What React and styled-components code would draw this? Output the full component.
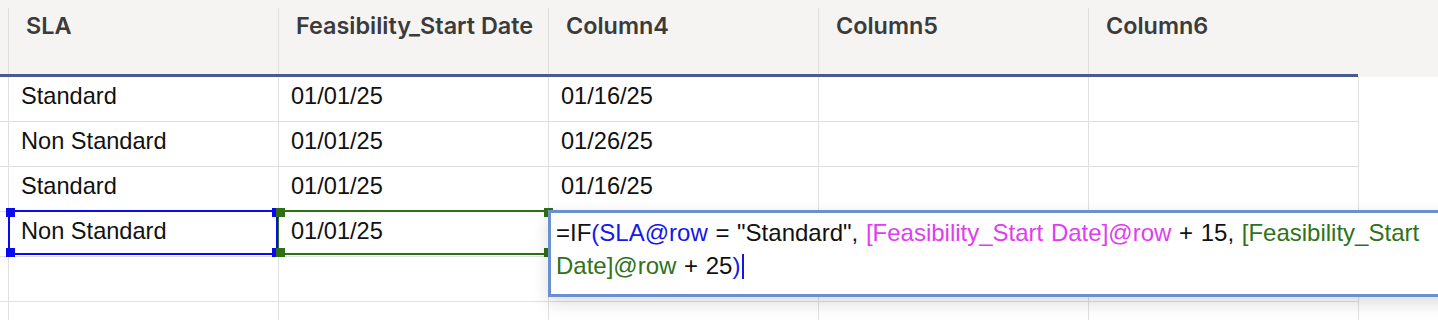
import React from 'react';
import styled, { createGlobalStyle } from 'styled-components';

const GlobalStyle = createGlobalStyle`
  html, body {
    margin: 0;
    padding: 0;
    background: #fff;
    overflow: hidden;
  }
`;

const Sheet = styled.div`
  display: grid;
  grid-template-columns: 8px repeat(5, 270px) 1fr;
  align-content: start;
  width: 100%;
  height: 100vh;
  overflow: hidden;
  font-family: "Liberation Sans", Arial, sans-serif;
`;

const HeadCell = styled.div`
  height: 77px;
  box-sizing: border-box;
  background: #f5f4f2;
  padding-top: 8px;
  border-bottom: ${p => (p.$filler ? 'none' : '3px solid #4b5a8e')};
`;

const HeadLabel = styled.div`
  height: 100%;
  box-sizing: border-box;
  border-left: ${p => (p.$gutter ? 'none' : '1px solid #e2e0dc')};
  padding: 6px 0 0 17px;
  font-family: Inter, "Liberation Sans", sans-serif;
  font-weight: 600;
  font-size: 23.4px;
  line-height: 24px;
  color: #3b3b3b;
  white-space: nowrap;
`;

const Cell = styled.div`
  position: relative;
  height: 45px;
  box-sizing: border-box;
  border-left: ${p => (p.$gutter ? 'none' : '1px solid #e0e0e0')};
  border-bottom: ${p => (p.$filler ? 'none' : '1px solid #e0e0e0')};
  padding: 6px 0 0 12px;
  font-size: 23.6px;
  line-height: 26px;
  color: #111;
  white-space: nowrap;
`;

const Selection = styled.div`
  position: absolute;
  top: -2px;
  bottom: 1px;
  left: -1px;
  right: ${p => (p.$tone === 'blue' ? '0px' : '-2px')};
  border: 2px solid ${p => (p.$tone === 'blue' ? '#0a0af0' : '#2f6e14')};
  border-left-width: ${p => (p.$tone === 'blue' ? '2px' : '1px')};
  pointer-events: none;
`;

const Handle = styled.span`
  position: absolute;
  width: 9px;
  height: 9px;
  background: ${p => (p.$tone === 'blue' ? '#0a0af0' : '#2f6e14')};
  ${p => (p.$y === 'top' ? 'top: -4px;' : 'bottom: -4px;')}
  ${p => (p.$x === 'left' ? `left: ${p.$tone === 'blue' ? '-4px' : '-3px'};` : 'right: -5px;')}
`;

const Editor = styled.div`
  position: absolute;
  top: -2px;
  left: -1px;
  width: 940px;
  height: 87px;
  box-sizing: border-box;
  background: #fff;
  border: 3px solid #6a8fd2;
  border-right: none;
  padding: 3px 37px 0 5px;
  box-shadow: 0 6px 16px rgba(0, 0, 0, 0.14);
  font-size: 24px;
  line-height: 33px;
  word-spacing: 1px;
  color: #111;
  white-space: normal;
  z-index: 2;
`;

const Token = styled.span`
  color: ${p => p.$color};
`;

const Caret = styled.span`
  display: inline-block;
  width: 0;
  height: 25px;
  border-left: 2px solid #1515e6;
  margin-left: 2px;
  vertical-align: -5px;
`;

const columns = ['SLA', 'Feasibility_Start Date', 'Column4', 'Column5', 'Column6'];

const rows = [
  ['Standard', '01/01/25', '01/16/25', '', ''],
  ['Non Standard', '01/01/25', '01/26/25', '', ''],
  ['Standard', '01/01/25', '01/16/25', '', ''],
  ['Non Standard', '01/01/25', null, '', ''],
  ['', '', '', '', ''],
  ['', '', '', '', ''],
];

const Corners = ({ tone }) => (
  <>
    <Handle $tone={tone} $x="left" $y="top" />
    <Handle $tone={tone} $x="right" $y="top" />
    <Handle $tone={tone} $x="left" $y="bottom" />
    <Handle $tone={tone} $x="right" $y="bottom" />
  </>
);

const FormulaEditor = () => (
  <Editor>
    =IF<Token $color="#1717e8">(SLA@row</Token> = "Standard",{' '}
    <Token $color="#e03df2">[Feasibility_Start Date]@row</Token> + 15,{' '}
    <Token $color="#2f7318">[Feasibility_Start Date]@row</Token> + 25
    <Token $color="#1717e8">)</Token>
    <Caret />
  </Editor>
);

export default function App() {
  return (
    <>
      <GlobalStyle />
      <Sheet>
        <HeadCell>
          <HeadLabel $gutter />
        </HeadCell>
        {columns.map(c => (
          <HeadCell key={c}>
            <HeadLabel>{c}</HeadLabel>
          </HeadCell>
        ))}
        <HeadCell $filler />

        {rows.map((row, r) => (
          <React.Fragment key={r}>
            <Cell $gutter />
            {row.map((value, c) => (
              <Cell key={c}>
                {value}
                {r === 3 && c === 0 && (
                  <Selection $tone="blue">
                    <Corners tone="blue" />
                  </Selection>
                )}
                {r === 3 && c === 1 && (
                  <Selection $tone="green">
                    <Corners tone="green" />
                  </Selection>
                )}
                {r === 3 && c === 2 && <FormulaEditor />}
              </Cell>
            ))}
            <Cell $filler />
          </React.Fragment>
        ))}
      </Sheet>
    </>
  );
}
